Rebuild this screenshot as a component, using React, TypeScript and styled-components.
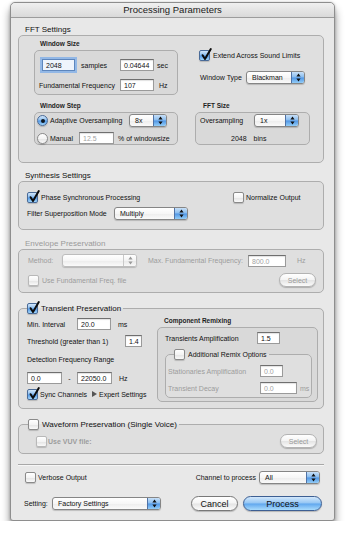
import React from 'react'
import styled, { createGlobalStyle, css } from 'styled-components'

const GlobalStyle = createGlobalStyle`
  html, body { margin: 0; padding: 0; background: #ffffff; }
  body {
    font-family: "Liberation Sans", Arial, sans-serif;
    font-size: 7px;
    color: #111;
  }
`

const Window = styled.div`
  box-sizing: border-box;
  margin: 2px 0 0 10px;
  width: 325px;
  height: 519px;
  background: #e8e8e8;
  border: 1px solid #8e8e8e;
  border-radius: 5px 5px 3px 3px;
  box-shadow: 0 7px 9px rgba(0, 0, 0, 0.45), 0 0 3px rgba(0, 0, 0, 0.2);
  display: flex;
  flex-direction: column;
  overflow: hidden;
`

const TitleBar = styled.div`
  height: 14px;
  flex: none;
  border-bottom: 1px solid #9c9c9c;
  background: linear-gradient(#f0f0f0, #d9d9d9);
  border-radius: 4px 4px 0 0;
  text-align: center;
  font-size: 9.5px;
  line-height: 14px;
  color: #1a1a1a;
`

const Content = styled.div`
  padding: 6px 10px 0 7px;
  display: flex;
  flex-direction: column;
`

const GroupTitle = styled.div<{ $mt?: number; $dim?: boolean }>`
  height: 11px;
  line-height: 11px;
  font-size: 8px;
  padding-left: 7px;
  margin-top: ${p => p.$mt ?? 0}px;
  color: ${p => (p.$dim ? '#9a9a9a' : '#111')};
`

const Box = styled.div<{ $h: number; $pad?: string }>`
  box-sizing: border-box;
  height: ${p => p.$h}px;
  border: 1px solid #adadad;
  border-radius: 5px;
  background: #dfdfdf;
  padding: ${p => p.$pad ?? '0'};
`

const InnerBox = styled(Box)`
  background: #d9d9d9;
`

const Group = styled.fieldset<{ $h: number; $mt?: number; $w?: number; $mr?: number }>`
  box-sizing: border-box;
  margin: ${p => p.$mt ?? 0}px ${p => p.$mr ?? 0}px 0 0;
  padding: 0;
  min-width: 0;
  height: ${p => p.$h}px;
  ${p => p.$w && css`width: ${p.$w}px;`}
  border: 1px solid #adadad;
  border-radius: 5px;
  background: #dfdfdf;
`

const Legend = styled.legend<{ $ml: number; $size?: number }>`
  margin-left: ${p => p.$ml}px;
  padding: 0 2px 0 0;
  font-size: ${p => p.$size ?? 8}px;
`

const LegendInner = styled.span`
  display: flex;
  align-items: center;
  gap: 3px;
  height: 12px;
`

const SubTitle = styled.div<{ $pl?: number; $mt?: number }>`
  height: 10px;
  line-height: 10px;
  padding: 0 0 1px ${p => p.$pl ?? 6}px;
  margin-top: ${p => p.$mt ?? 0}px;
  font-size: 6.5px;
  font-weight: bold;
  color: #1e1e1e;
`

const FftGrid = styled.div`
  display: grid;
  grid-template-columns: 144px 115px;
  column-gap: 17px;
  row-gap: 6px;
  padding: 3px 0 0 15px;
`

const Cell = styled.div`
  display: flex;
  flex-direction: column;
`

const SizeGrid = styled.div`
  display: grid;
  grid-template-columns: 78px 34px auto;
  grid-auto-rows: 12px;
  column-gap: 3px;
  row-gap: 8px;
  align-items: center;
  padding-left: 4px;
`

const Row = styled.div<{ $mt?: number; $h?: number; $pl?: number; $pr?: number }>`
  display: flex;
  align-items: center;
  height: ${p => p.$h ?? 12}px;
  margin-top: ${p => p.$mt ?? 0}px;
  padding-left: ${p => p.$pl ?? 0}px;
  padding-right: ${p => p.$pr ?? 0}px;
`

const Text = styled.span<{ $w?: number; $ml?: number; $dim?: boolean; $size?: number; $center?: boolean; $bold?: boolean }>`
  flex: none;
  white-space: nowrap;
  ${p => p.$w !== undefined && css`width: ${p.$w}px;`}
  margin-left: ${p => p.$ml ?? 0}px;
  font-size: ${p => p.$size ?? 7}px;
  color: ${p => (p.$dim ? '#9c9c9c' : '#111')};
  text-align: ${p => (p.$center ? 'center' : 'left')};
  font-weight: ${p => (p.$bold ? 'bold' : 'normal')};
`

const Spacer = styled.span`
  flex: 1;
`

const Field = styled.div<{ $w: number; $ml?: number; $focus?: boolean; $dim?: boolean }>`
  box-sizing: border-box;
  flex: none;
  width: ${p => p.$w}px;
  height: 12px;
  margin-left: ${p => p.$ml ?? 0}px;
  background: #ffffff;
  border: 1px solid #9a9a9a;
  border-top-color: #6f6f6f;
  box-shadow: inset 0 1px 1px rgba(0, 0, 0, 0.12);
  padding-left: 3px;
  font-size: 7px;
  line-height: 11px;
  color: ${p => (p.$dim ? '#a3a3a3' : '#111')};
  ${p =>
    p.$focus &&
    css`
      border-color: #5d86bd;
      background: #eef4fc;
      box-shadow: 0 0 0 2px #93b8e6;
    `}
`

const PopupBox = styled.div<{ $w: number; $ml?: number; $dim?: boolean }>`
  box-sizing: border-box;
  flex: none;
  display: flex;
  width: ${p => p.$w}px;
  height: 13px;
  margin-left: ${p => p.$ml ?? 0}px;
  border: 1px solid ${p => (p.$dim ? '#bdbdbd' : '#858585')};
  border-radius: 3px;
  background: linear-gradient(#ffffff, #f6f6f6 50%, #ececec 51%, #fafafa);
  box-shadow: 0 1px 1px rgba(0, 0, 0, 0.18);
  overflow: hidden;
`

const PopupValue = styled.span`
  flex: 1;
  padding-left: 5px;
  font-size: 7px;
  line-height: 11px;
  white-space: nowrap;
`

const PopupKnob = styled.span<{ $dim?: boolean }>`
  width: 12px;
  flex: none;
  display: flex;
  align-items: center;
  justify-content: center;
  border-left: 1px solid ${p => (p.$dim ? '#c9c9c9' : '#4f72a6')};
  background: ${p =>
    p.$dim
      ? 'linear-gradient(#ffffff, #f3f3f3 50%, #e8e8e8 51%, #f8f8f8)'
      : 'linear-gradient(#c8e0f8, #86bbef 48%, #4f95e5 52%, #93cdf7)'};
`

const CheckBoxEl = styled.span<{ $on?: boolean; $dim?: boolean; $round?: boolean }>`
  position: relative;
  box-sizing: border-box;
  flex: none;
  display: inline-block;
  width: 11px;
  height: 11px;
  border-radius: ${p => (p.$round ? '50%' : '2px')};
  border: 1px solid ${p => (p.$on ? '#4a6b98' : p.$dim ? '#b8b8b8' : '#8a8a8a')};
  background: ${p =>
    p.$on
      ? 'linear-gradient(#d2e6fa, #86bbef 48%, #4f95e5 52%, #a2d6fa)'
      : 'linear-gradient(#ffffff, #f4f4f4 50%, #e3e3e3 51%, #fafafa)'};
  box-shadow: 0 1px 1px rgba(0, 0, 0, 0.18);
`

const CheckMark = styled.svg`
  position: absolute;
  left: 0;
  top: -3px;
  width: 12px;
  height: 13px;
  overflow: visible;
  fill: none;
  stroke: #0c0c0c;
  stroke-width: 2px;
  stroke-linecap: round;
  stroke-linejoin: round;
`

const RadioDot = styled.span`
  position: absolute;
  left: 2.5px;
  top: 2.5px;
  width: 4px;
  height: 4px;
  border-radius: 50%;
  background: #101820;
`

const PushButton = styled.div<{ $w: number; $h: number; $primary?: boolean; $dim?: boolean; $size?: number; $ml?: number }>`
  box-sizing: border-box;
  flex: none;
  display: flex;
  align-items: center;
  justify-content: center;
  width: ${p => p.$w}px;
  height: ${p => p.$h}px;
  margin-left: ${p => p.$ml ?? 0}px;
  border-radius: 999px;
  font-size: ${p => p.$size ?? 7}px;
  color: ${p => (p.$dim ? '#9a9a9a' : '#111')};
  border: 1px solid ${p => (p.$primary ? '#3d5f93' : p.$dim ? '#b3b3b3' : '#787878')};
  background: ${p =>
    p.$primary
      ? 'linear-gradient(#d3e8fc, #93c5f3 48%, #5fa6ee 52%, #a9dbfc)'
      : 'linear-gradient(#ffffff, #f4f4f4 48%, #e4e4e4 52%, #fbfbfb)'};
  box-shadow: 0 1px 1px rgba(0, 0, 0, 0.22);
`

const Separator = styled.div`
  height: 1px;
  margin-top: 10px;
  background: #a8a8a8;
  border-bottom: 1px solid #f6f6f6;
`

const Columns = styled.div`
  display: flex;
  padding-left: 8px;
`

const LeftCol = styled.div`
  width: 130px;
  display: flex;
  flex-direction: column;
`

const RightCol = styled.div`
  width: 161px;
  display: flex;
  flex-direction: column;
  padding-top: 2px;
`

const Disclosure = styled.svg`
  width: 5px;
  height: 6px;
  margin-right: 2px;
  fill: #555;
`

const Checkbox = ({ on, dim }: { on?: boolean; dim?: boolean }) => (
  <CheckBoxEl $on={on} $dim={dim}>
    {on && (
      <CheckMark viewBox="0 0 12 13">
        <path d="M2.6 7.2 L5 11 L10.8 1" />
      </CheckMark>
    )}
  </CheckBoxEl>
)

const Radio = ({ on }: { on?: boolean }) => (
  <CheckBoxEl $on={on} $round>
    {on && <RadioDot />}
  </CheckBoxEl>
)

const Popup = ({ value, w, ml, dim }: { value: string; w: number; ml?: number; dim?: boolean }) => (
  <PopupBox $w={w} $ml={ml} $dim={dim}>
    <PopupValue>{value}</PopupValue>
    <PopupKnob $dim={dim}>
      <svg width="5" height="9" viewBox="0 0 5 9">
        <path d="M2.5 0.6 L4.6 3.4 L0.4 3.4 Z M2.5 8.4 L4.6 5.6 L0.4 5.6 Z" fill={dim ? '#9a9a9a' : '#111'} />
      </svg>
    </PopupKnob>
  </PopupBox>
)

const App = () => {
  return (
    <>
      <GlobalStyle />
      <Window>
        <TitleBar>Processing Parameters</TitleBar>
        <Content>
          {/* FFT SETTINGS */}
          <GroupTitle>FFT Settings</GroupTitle>
          <Box $h={128}>
            <FftGrid>
              <Cell>
                <SubTitle>Window Size</SubTitle>
                <InnerBox $h={45} $pad="8px 0 0 0">
                  <SizeGrid>
                    <Row>
                      <Field $w={33} $ml={3} $focus>2048</Field>
                      <Text $ml={6}>samples</Text>
                    </Row>
                    <Field $w={34}>0.04644</Field>
                    <Text>sec</Text>
                    <Text>Fundamental Frequency</Text>
                    <Field $w={34}>107</Field>
                    <Text $ml={2}>Hz</Text>
                  </SizeGrid>
                </InnerBox>
              </Cell>
              <Cell>
                <Row $mt={10} $pl={4}>
                  <Checkbox on />
                  <Text $ml={3}>Extend Across Sound Limits</Text>
                </Row>
                <Row $mt={10} $h={13} $pl={5}>
                  <Text $w={46}>Window Type</Text>
                  <Popup value="Blackman" w={59} />
                </Row>
              </Cell>
              <Cell>
                <SubTitle>Window Step</SubTitle>
                <InnerBox $h={33} $pad="1px 0 0 2px">
                  <Row $h={13}>
                    <Radio on />
                    <Text $w={79} $ml={2}>Adaptive Oversampling</Text>
                    <Popup value="8x" w={38} />
                  </Row>
                  <Row $mt={5}>
                    <Radio />
                    <Text $w={29} $ml={2}>Manual</Text>
                    <Field $w={35} $dim>12.5</Field>
                    <Text $ml={4}>% of windowsize</Text>
                  </Row>
                </InnerBox>
              </Cell>
              <Cell>
                <SubTitle $pl={8}>FFT Size</SubTitle>
                <InnerBox $h={33} $pad="1px 0 0 4px">
                  <Row $h={13}>
                    <Text $w={54}>Oversampling</Text>
                    <Popup value="1x" w={45} />
                  </Row>
                  <Row $mt={5} $pl={31}>
                    <Text>2048</Text>
                    <Text $ml={7}>bins</Text>
                  </Row>
                </InnerBox>
              </Cell>
            </FftGrid>
          </Box>

          {/* SYNTHESIS SETTINGS */}
          <GroupTitle $mt={7}>Synthesis Settings</GroupTitle>
          <Box $h={49} $pad="9px 0 0 8px">
            <Row>
              <Checkbox on />
              <Text $w={192} $ml={3}>Phase Synchronous Processing</Text>
              <Checkbox />
              <Text $ml={2}>Normalize Output</Text>
            </Row>
            <Row $mt={4} $h={13}>
              <Text $w={87}>Filter Superposition Mode</Text>
              <Popup value="Multiply" w={74} />
            </Row>
          </Box>

          {/* ENVELOPE PRESERVATION */}
          <GroupTitle $mt={8} $dim>Envelope Preservation</GroupTitle>
          <Box $h={44} $pad="4px 7px 0 9px">
            <Row $h={13}>
              <Text $w={34} $dim>Method:</Text>
              <Popup value="" w={75} dim />
              <Text $w={100} $ml={11} $dim>Max. Fundamental Frequency:</Text>
              <Field $w={38} $dim>800.0</Field>
              <Text $ml={11} $dim>Hz</Text>
            </Row>
            <Row $mt={6} $h={14}>
              <Checkbox dim />
              <Text $ml={3} $dim>Use Fundamental Freq. file</Text>
              <Spacer />
              <PushButton $w={37} $h={14} $dim>Select</PushButton>
            </Row>
          </Box>

          {/* TRANSIENT PRESERVATION */}
          <Group $h={107} $mt={9}>
            <Legend $ml={8}>
              <LegendInner>
                <Checkbox on />
                <span>Transient Preservation</span>
              </LegendInner>
            </Legend>
            <Columns>
              <LeftCol>
                <Row $mt={4}>
                  <Text $w={50}>Min. Interval</Text>
                  <Field $w={34}>20.0</Field>
                  <Text $ml={7}>ms</Text>
                </Row>
                <Row $mt={5}>
                  <Text $w={98}>Threshold (greater than 1)</Text>
                  <Field $w={17}>1.4</Field>
                </Row>
                <Row $mt={6}>
                  <Text>Detection Frequency Range</Text>
                </Row>
                <Row $mt={7}>
                  <Field $w={35}>0.0</Field>
                  <Text $w={15} $center>-</Text>
                  <Field $w={35}>22050.0</Field>
                  <Text $ml={7}>Hz</Text>
                </Row>
                <Row $mt={4}>
                  <Checkbox on />
                  <Text $w={52} $ml={2}>Sync Channels</Text>
                  <Disclosure viewBox="0 0 5 6">
                    <path d="M0 0 L5 3 L0 6 Z" />
                  </Disclosure>
                  <Text>Expert Settings</Text>
                </Row>
              </LeftCol>
              <RightCol>
                <SubTitle $pl={7}>Component Remixing</SubTitle>
                <InnerBox $h={75} $pad="4px 0 0 7px">
                  <Row>
                    <Text $w={92}>Transients Amplification</Text>
                    <Field $w={23}>1.5</Field>
                  </Row>
                  <Group $h={50} $mt={4} $mr={5}>
                    <Legend $ml={8} $size={7}>
                      <LegendInner>
                        <Checkbox />
                        <span>Additional Remix Options</span>
                      </LegendInner>
                    </Legend>
                    <Row $mt={5} $pl={2}>
                      <Text $w={92} $dim>Stationaries Amplification</Text>
                      <Field $w={23} $dim>0.0</Field>
                    </Row>
                    <Row $mt={5} $pl={2}>
                      <Text $w={92} $dim>Transient Decay</Text>
                      <Field $w={37} $dim>0.0</Field>
                      <Text $ml={3} $dim>ms</Text>
                    </Row>
                  </Group>
                </InnerBox>
              </RightCol>
            </Columns>
          </Group>

          {/* WAVEFORM PRESERVATION */}
          <Group $h={36} $mt={9}>
            <Legend $ml={9}>
              <LegendInner>
                <Checkbox />
                <span>Waveform Preservation (Single Voice)</span>
              </LegendInner>
            </Legend>
            <Row $mt={4} $h={14} $pl={17} $pr={6}>
              <Checkbox dim />
              <Text $ml={1} $dim $bold>Use VUV file:</Text>
              <Spacer />
              <PushButton $w={37} $h={14} $dim>Select</PushButton>
            </Row>
          </Group>

          <Separator />

          {/* FOOTER */}
          <Row $mt={5} $h={13} $pl={7} $pr={4}>
            <Checkbox />
            <Text $ml={2}>Verbose Output</Text>
            <Spacer />
            <Text>Channel to process</Text>
            <Popup value="All" w={61} ml={3} />
          </Row>
          <Row $mt={12} $h={15} $pl={6} $pr={2}>
            <Text $w={28}>Setting:</Text>
            <Popup value="Factory Settings" w={109} />
            <Spacer />
            <PushButton $w={47} $h={15} $size={9}>Cancel</PushButton>
            <PushButton $w={79} $h={15} $size={9} $ml={5} $primary>Process</PushButton>
          </Row>
        </Content>
      </Window>
    </>
  )
}

export default App
